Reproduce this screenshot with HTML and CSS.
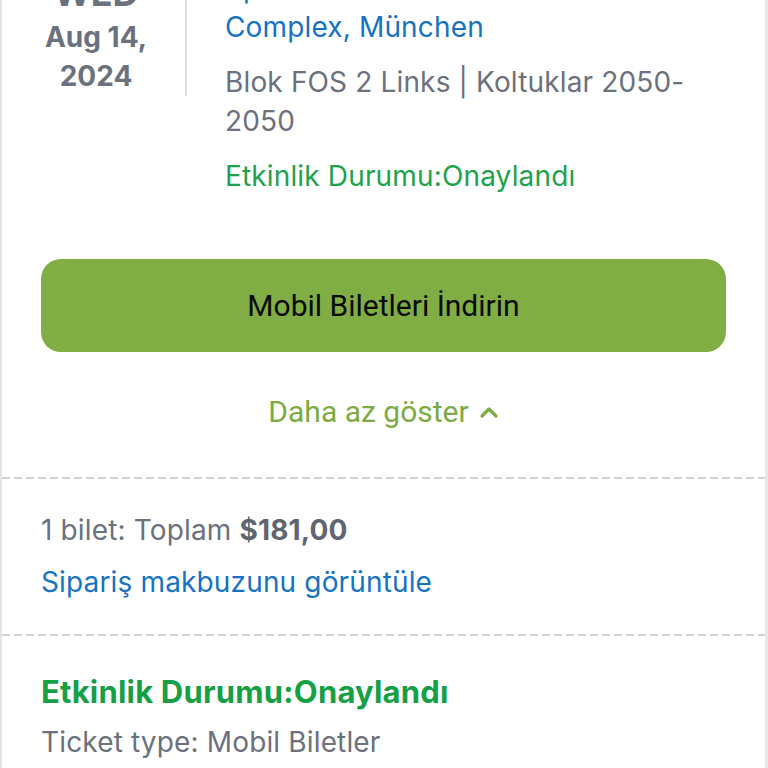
FILE: index.html
```html
<!DOCTYPE html>
<html>
<head>

    <title>Siparişlerim</title>

    <link rel="stylesheet" href="styles.css">

</head>
<body>

    <div class="order-card">

        <div class="event-section">
            <div class="event-row">
                <div class="event-date">
                    <div class="weekday">WED</div>
                    <div class="day">Aug 14,</div>
                    <div class="day">2024</div>
                </div>
                <div class="event-info">
                    <a class="venue" href="#">Sport Arena BMW Indoor Event Complex, München</a>
                    <p class="seats">Blok FOS 2 Links | Koltuklar 2050-2050</p>
                    <p class="status">Etkinlik Durumu:Onaylandı</p>
                </div>
            </div>

            <button class="download-btn" type="button">Mobil Biletleri İndirin</button>

            <button class="toggle-btn" type="button">
                Daha az göster
                <svg width="20" height="20" viewBox="0 0 20 20">
                    <polyline points="3,14 10,7 17,14" fill="none" stroke="currentColor" stroke-width="3.2" stroke-linecap="round" stroke-linejoin="round"/>
                </svg>
            </button>
        </div>

        <div class="dashed"></div>

        <div class="total-section">
            <p class="total">1 bilet: Toplam <strong>$181,00</strong></p>
            <a class="receipt" href="#">Sipariş makbuzunu görüntüle</a>
        </div>

        <div class="dashed"></div>

        <div class="ticket-section">
            <p class="ticket-status">Etkinlik Durumu:Onaylandı</p>
            <p class="ticket-type">Ticket type: Mobil Biletler</p>
        </div>

    </div>

</body>
</html>
```

FILE: styles.css
```css
body {
    font-family: Inter, "Noto Sans", sans-serif;
    margin: 0;
    padding: 0;
    background-color: #ffffff;
    overflow: hidden;
}

p {
    margin: 0;
}

a {
    text-decoration: none;
}

.order-card {
    border-left: 2px solid #e4e4e4;
    border-right: 3px solid #e8e8e8;
    background-color: #ffffff;
    font-size: 28px;
    line-height: 39px;
    letter-spacing: 0.15px;
    color: #6b717d;
}


.event-section {
    margin-top: -32px;
    padding: 0 39px 46px;
}

.event-row {
    display: flex;
    align-items: flex-start;
}

.event-date {
    width: 110px;
    padding-top: 4px;
    padding-right: 34px;
    border-right: 2px solid #dedede;
    text-align: center;
    font-weight: 700;
    letter-spacing: 0;
}

.weekday {
    font-size: 36px;
    line-height: 42px;
    margin-bottom: 4px;
}

.day {
    font-size: 28px;
}

.event-info {
    flex: 1;
    padding-left: 38px;
    padding-top: 1px;
}

.venue {
    display: block;
    color: #1673c2;
}

.seats {
    margin-top: 16px;
}

.status {
    margin-top: 16px;
    color: #1ea34c;
}

.download-btn {
    display: block;
    width: 100%;
    height: 93px;
    margin-top: 63px;
    border: none;
    border-radius: 20px;
    background-color: #80ae45;
    color: #0a0a0a;
    font-family: Roboto, sans-serif;
    font-size: 30px;
    cursor: pointer;
}

.toggle-btn {
    display: flex;
    align-items: center;
    justify-content: center;
    gap: 10px;
    width: 100%;
    margin-top: 40px;
    padding: 0;
    border: none;
    background: none;
    color: #7dab45;
    font-family: Roboto, sans-serif;
    font-size: 30px;
    line-height: 39px;
    cursor: pointer;
}


.dashed {
    height: 2px;
    background-image: repeating-linear-gradient(to right, #d2d2d2 0 8px, transparent 8px 12px);
}


.total-section {
    padding: 32px 39px 32px;
}

.total strong {
    color: #5f6571;
}

.receipt {
    display: block;
    margin-top: 13px;
    color: #1673c2;
}


.ticket-section {
    padding: 36px 39px 20px;
}

.ticket-status {
    color: #16a046;
    font-size: 31px;
    font-weight: 700;
    letter-spacing: 0.2px;
}

.ticket-type {
    margin-top: 12px;
}
```
